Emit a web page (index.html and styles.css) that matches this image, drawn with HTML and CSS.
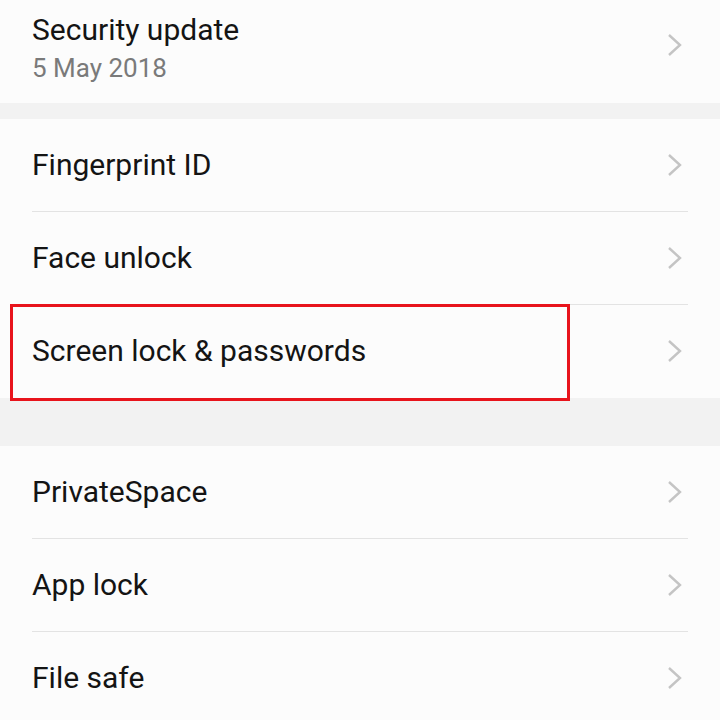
FILE: index.html
```html
<!DOCTYPE html>
<html lang="en">
<head>
<meta charset="UTF-8">
<meta name="viewport" content="width=device-width, initial-scale=1.0">
<title>Security &amp; privacy</title>
<link rel="stylesheet" href="styles.css">
</head>
<body>
<div class="group">
    <div class="item item-top">
        <div class="item-inner">
            <div class="item-text">
                <div class="item-title">Security update</div>
                <div class="item-sub">5 May 2018</div>
            </div>
            <svg class="chevron" viewBox="0 0 16 24"><path d="M2 2 L13 12 L2 22"/></svg>
        </div>
    </div>
</div>

<div class="gap"></div>

<div class="group">
    <div class="item">
        <div class="item-inner">
            <div class="item-title">Fingerprint ID</div>
            <svg class="chevron" viewBox="0 0 16 24"><path d="M2 2 L13 12 L2 22"/></svg>
        </div>
    </div>
    <div class="item">
        <div class="item-inner">
            <div class="item-title">Face unlock</div>
            <svg class="chevron" viewBox="0 0 16 24"><path d="M2 2 L13 12 L2 22"/></svg>
        </div>
    </div>
    <div class="item highlighted">
        <div class="item-inner">
            <div class="item-title">Screen lock &amp; passwords</div>
            <svg class="chevron" viewBox="0 0 16 24"><path d="M2 2 L13 12 L2 22"/></svg>
        </div>
        <div class="mark"></div>
    </div>
</div>

<div class="gap gap-big"></div>

<div class="group">
    <div class="item">
        <div class="item-inner">
            <div class="item-title">PrivateSpace</div>
            <svg class="chevron" viewBox="0 0 16 24"><path d="M2 2 L13 12 L2 22"/></svg>
        </div>
    </div>
    <div class="item">
        <div class="item-inner">
            <div class="item-title">App lock</div>
            <svg class="chevron" viewBox="0 0 16 24"><path d="M2 2 L13 12 L2 22"/></svg>
        </div>
    </div>
    <div class="item">
        <div class="item-inner">
            <div class="item-title">File safe</div>
            <svg class="chevron" viewBox="0 0 16 24"><path d="M2 2 L13 12 L2 22"/></svg>
        </div>
    </div>
</div>
</body>
</html>
```

FILE: styles.css
```css
body {
    margin: 0;
    font-family: Roboto, 'Noto Sans', sans-serif;
    background-color: #fcfcfc;
    color: #141414;
    width: 720px;
    height: 720px;
    overflow: hidden;
}
.group {
    background-color: #fcfcfc;
}
.gap {
    height: 16px;
    background-color: #f2f2f2;
}
.gap-big {
    height: 48px;
}
.item {
    position: relative;
    padding: 0 32px;
}
.item-inner {
    display: flex;
    align-items: center;
    justify-content: space-between;
    height: 92px;
    padding-right: 5px;
    border-bottom: 1px solid #e3e3e3;
}
.group .item:last-child .item-inner {
    border-bottom-color: transparent;
}
.item-top .item-inner {
    height: 102px;
    align-items: flex-start;
}
.item-top .item-text {
    padding-top: 11px;
}
.item-top .chevron {
    margin-top: 33px;
}
.item-title {
    font-size: 30px;
    line-height: 38px;
}
.item-sub {
    font-size: 26px;
    line-height: 38px;
    color: #7a7a7a;
}
.chevron {
    width: 16px;
    height: 24px;
    fill: none;
    stroke: #c4c4c4;
    stroke-width: 2.4;
}
/* red outline drawn over the selected row */
.mark {
    position: absolute;
    left: 10px;
    top: -1px;
    width: 554px;
    height: 91px;
    border: 3px solid #e8141c;
    pointer-events: none;
}
```
